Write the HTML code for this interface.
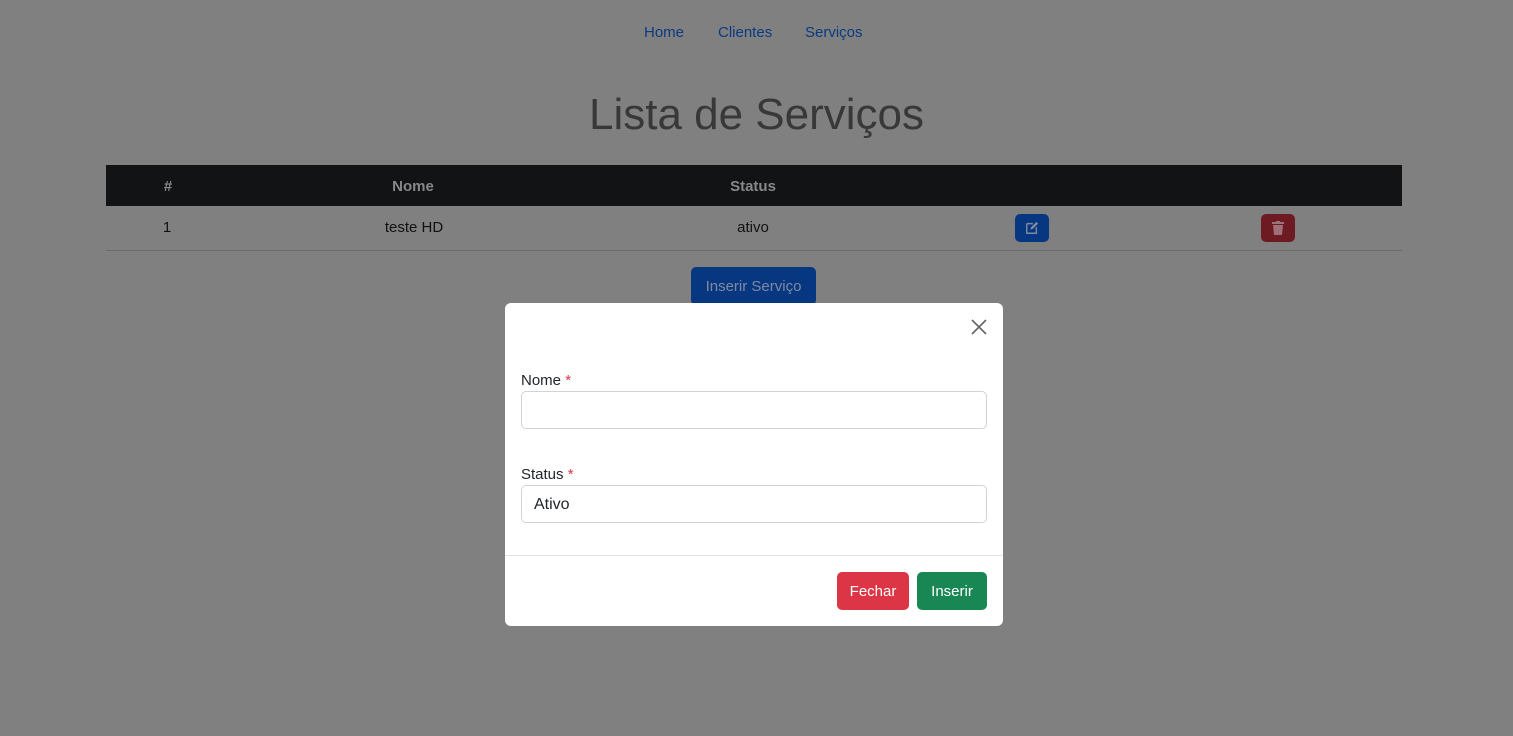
<!DOCTYPE html>
<html><head><meta charset="utf-8"><style>
*{box-sizing:border-box;margin:0;padding:0}
body{width:1513px;height:736px;background:#808080;font-family:"Liberation Sans",sans-serif;position:relative;overflow:hidden;color:#111}
.a{position:absolute}
.nav a{position:absolute;top:24px;font-size:15px;color:#0a3a80;text-decoration:none}
h1{position:absolute;top:90px;left:0;width:1513px;text-align:center;font-weight:300;font-size:44px;color:#383838}
.th{position:absolute;top:165px;left:106px;width:1296px;height:41px;background:#121315}
.th span{position:absolute;top:13px;font-size:15px;font-weight:bold;color:#888;transform:translateX(-50%)}
.td span{position:absolute;top:219px;font-size:15px;color:#111;transform:translateX(-50%)}
.btn{position:absolute;border-radius:5px;font-size:15px;text-align:center}
.modal{position:absolute;left:505px;top:303px;width:498px;height:323px;background:#fff;border-radius:6px}
.inp{position:absolute;left:16px;width:466px;height:38px;border:1px solid #ced4da;border-radius:5px;font-size:16px;padding:10px 12px;color:#212529}
.lbl{position:absolute;left:16px;font-size:15px;color:#212529}
.lbl b{color:#dc3545;font-weight:normal}
</style></head><body>
<div class="nav"><a style="left:644px">Home</a><a style="left:718px">Clientes</a><a style="left:805px">Serviços</a></div>
<h1>Lista de Serviços</h1>
<div class="th"><span style="left:62px">#</span><span style="left:307px">Nome</span><span style="left:647px">Status</span></div>
<div class="td"><span style="left:167px">1</span><span style="left:414px">teste HD</span><span style="left:753px">ativo</span></div>
<div class="a" style="left:106px;top:250px;width:1296px;height:1px;background:#6a6a6a"></div>
<div class="btn" style="left:1015px;top:214px;width:34px;height:28px;background:#073780">
<svg width="14" height="14" viewBox="0 0 16 16" style="margin-top:7px"><path d="M2 3h7M2 3v11h11V7" stroke="#7f8aa0" stroke-width="1.6" fill="none"/><path d="M6 10l1-3 6-6 2 2-6 6z" fill="#7f8aa0"/></svg></div>
<div class="btn" style="left:1261px;top:214px;width:34px;height:28px;background:#6e1a22">
<svg width="12" height="14" viewBox="0 0 12 14" style="margin-top:7px"><rect x="0" y="1" width="12" height="2" fill="#a07078"/><rect x="4" y="0" width="4" height="2" fill="#a07078"/><path d="M1 4h10l-1 10H2z" fill="#a07078"/></svg></div>
<div class="btn" style="left:691px;top:267px;width:125px;height:38px;background:#073780;color:#7f8aa0;padding-top:11px">Inserir Serviço</div>
<div class="modal">
<svg class="a" style="left:466px;top:16px" width="16" height="16" viewBox="0 0 16 16"><path d="M1 1L15 15M15 1L1 15" stroke="#666" stroke-width="1.6"/></svg>
<div class="lbl" style="top:69px">Nome <b>*</b></div>
<div class="inp" style="top:88px"></div>
<div class="lbl" style="top:163px">Status <b>*</b></div>
<div class="inp" style="top:182px">Ativo</div>
<div class="a" style="left:0;top:252px;width:498px;height:1px;background:#dee2e6"></div>
<div class="btn" style="left:332px;top:269px;width:72px;height:38px;background:#dc3545;color:#fff;padding-top:11px">Fechar</div>
<div class="btn" style="left:412px;top:269px;width:70px;height:38px;background:#198754;color:#fff;padding-top:11px">Inserir</div>
</div>
</body></html>
